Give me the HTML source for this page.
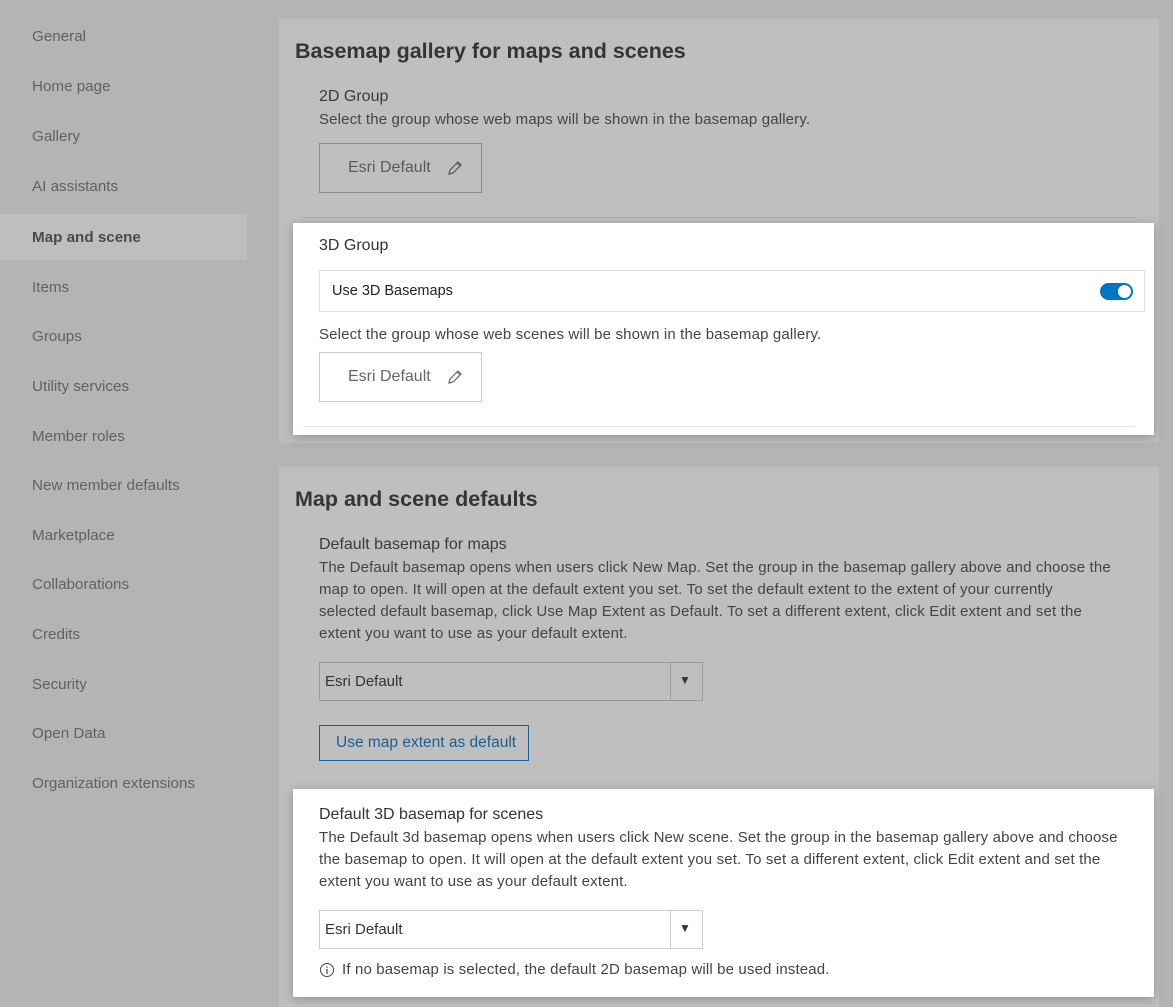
<!DOCTYPE html>
<html><head><meta charset="utf-8"><style>
*{margin:0;padding:0;box-sizing:border-box}
body{width:1173px;height:1003px;background:#b4b4b4;font-family:"Liberation Sans",sans-serif;position:relative;overflow:hidden;color:#3a3a3a}
.a{position:absolute;white-space:nowrap}
.nav{position:absolute;left:32px;font-size:15.2px;color:#616161;line-height:20px}
.card{position:absolute;background:#bfbfbf}
.h1{font-size:21.5px;font-weight:bold;color:#353535}
.h2{font-size:16px;color:#3a3a3a}
.p{font-size:15px;letter-spacing:0.15px;color:#444;line-height:22px}
.white{position:absolute;background:#fff;box-shadow:0 2px 10px rgba(0,0,0,.25)}
.btn{position:absolute;border:1px solid #8a8a8a;font-size:16px;color:#5a5a5a}
.sel{position:absolute;border:1px solid #9a9a9a;font-size:15px;color:#333}
</style></head><body>
<div style="position:absolute;left:0;top:214px;width:247px;height:46px;background:#bebebe"></div>
<div class="nav" style="top:27px">General</div>
<div class="nav" style="top:77px">Home page</div>
<div class="nav" style="top:127px">Gallery</div>
<div class="nav" style="top:177px">AI assistants</div>
<div class="nav" style="top:228px;font-weight:bold;color:#4a4a4a">Map and scene</div>
<div class="nav" style="top:278px">Items</div>
<div class="nav" style="top:327px">Groups</div>
<div class="nav" style="top:377px">Utility services</div>
<div class="nav" style="top:427px">Member roles</div>
<div class="nav" style="top:476px">New member defaults</div>
<div class="nav" style="top:526px">Marketplace</div>
<div class="nav" style="top:575px">Collaborations</div>
<div class="nav" style="top:625px">Credits</div>
<div class="nav" style="top:675px">Security</div>
<div class="nav" style="top:724px">Open Data</div>
<div class="nav" style="top:774px">Organization extensions</div>

<div class="card" style="left:279px;top:19px;width:880px;height:424px"></div>
<div class="card" style="left:279px;top:467px;width:880px;height:540px"></div>

<div class="a h1" style="left:295px;top:39px">Basemap gallery for maps and scenes</div>
<div class="a h2" style="left:319px;top:88px">2D Group</div>
<div class="a p" style="left:319px;top:109px">Select the group whose web maps will be shown in the basemap gallery.</div>
<div class="btn" style="left:319px;top:143px;width:163px;height:50px"><span class="a" style="left:28px;top:15px">Esri Default</span>
<svg class="a" style="left:127px;top:16px" width="16" height="16" viewBox="0 0 16 16"><path d="M2 14l1-4 8-8 3 3-8 8z M10 3l3 3" fill="none" stroke="#555" stroke-width="1.2"/></svg></div>
<div style="position:absolute;left:303px;top:217px;width:832px;height:1px;background:#aaa"></div>

<div class="white" style="left:293px;top:223px;width:861px;height:212px">
<div class="a h2" style="left:26px;top:14px;color:#333">3D Group</div>
<div class="a" style="left:26px;top:47px;width:826px;height:42px;border:1px solid #ddd">
<span class="a" style="left:12px;top:12px;font-size:14.5px;color:#222">Use 3D Basemaps</span>
<div class="a" style="left:780px;top:12px;width:33px;height:17px;border-radius:9px;background:#0075c4"><div class="a" style="left:18px;top:2px;width:13px;height:13px;border-radius:50%;background:#fff"></div></div>
</div>
<div class="a p" style="left:26px;top:101px">Select the group whose web scenes will be shown in the basemap gallery.</div>
<div class="btn" style="left:26px;top:129px;width:163px;height:50px;border-color:#ccc;color:#666"><span class="a" style="left:28px;top:15px">Esri Default</span>
<svg class="a" style="left:127px;top:16px" width="16" height="16" viewBox="0 0 16 16"><path d="M2 14l1-4 8-8 3 3-8 8z M10 3l3 3" fill="none" stroke="#666" stroke-width="1.2"/></svg></div>
<div class="a" style="left:10px;top:203px;width:832px;height:1px;background:#e6e6e6"></div>
</div>

<div class="a h1" style="left:295px;top:487px">Map and scene defaults</div>
<div class="a h2" style="left:319px;top:536px">Default basemap for maps</div>
<div class="a p" style="left:319px;top:557px">The Default basemap opens when users click New Map. Set the group in the basemap gallery above and choose the<br>map to open. It will open at the default extent you set. To set the default extent to the extent of your currently<br>selected default basemap, click Use Map Extent as Default. To set a different extent, click Edit extent and set the<br>extent you want to use as your default extent.</div>
<div class="sel" style="left:319px;top:662px;width:384px;height:39px"><span class="a" style="left:5px;top:10px">Esri Default</span><div class="a" style="left:350px;top:0;width:1px;height:37px;background:#9a9a9a"></div><span class="a" style="left:359px;top:10px;font-size:12px;color:#333">▼</span></div>
<div class="a" style="left:319px;top:725px;width:210px;height:36px;border:1px solid #1a5f93;color:#1a5f93;font-size:15.5px"><span class="a" style="left:16px;top:8px">Use map extent as default</span></div>

<div class="white" style="left:293px;top:789px;width:861px;height:208px">
<div class="a h2" style="left:26px;top:17px;color:#333">Default 3D basemap for scenes</div>
<div class="a p" style="left:26px;top:38px;color:#444">The Default 3d basemap opens when users click New scene. Set the group in the basemap gallery above and choose<br>the basemap to open. It will open at the default extent you set. To set a different extent, click Edit extent and set the<br>extent you want to use as your default extent.</div>
<div class="sel" style="left:26px;top:121px;width:384px;height:39px;border-color:#ccc"><span class="a" style="left:5px;top:10px">Esri Default</span><div class="a" style="left:350px;top:0;width:1px;height:37px;background:#ccc"></div><span class="a" style="left:359px;top:10px;font-size:12px;color:#333">▼</span></div>
<svg class="a" style="left:26px;top:173px" width="16" height="16" viewBox="0 0 16 16"><circle cx="8" cy="8" r="6.5" fill="none" stroke="#444"/><path d="M8 7v5M8 4.5v1.2" stroke="#444" stroke-width="1.2"/></svg>
<div class="a" style="left:49px;top:172px;font-size:15px;letter-spacing:0.15px;color:#444">If no basemap is selected, the default 2D basemap will be used instead.</div>
</div>
</body></html>
